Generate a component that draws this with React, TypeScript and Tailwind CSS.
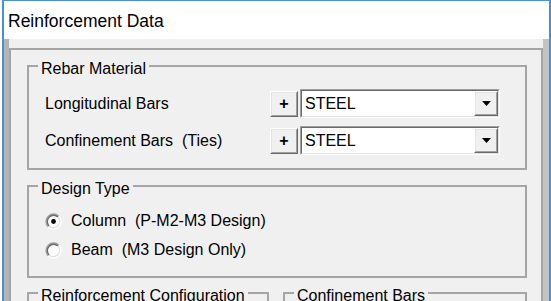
import React from "react";

function Raised({ className, children }: { className?: string; children?: React.ReactNode }) {
  return (
    <div className={`border border-t-white border-l-white border-r-[#696969] border-b-[#696969] ${className ?? ""}`}>
      <div className="h-full w-full border border-t-[#e3e3e3] border-l-[#e3e3e3] border-r-[#a0a0a0] border-b-[#a0a0a0] bg-[#f0f0f0] flex items-center justify-center">
        {children}
      </div>
    </div>
  );
}

function Combo({ value }: { value: string }) {
  return (
    <div className="w-[200px] h-[29px] border border-t-[#a0a0a0] border-l-[#a0a0a0] border-r-white border-b-white">
      <div className="h-full border border-t-[#696969] border-l-[#696969] border-r-[#e3e3e3] border-b-[#e3e3e3] bg-white flex items-center">
        <span className="flex-1 pl-[3px] text-black">{value}</span>
        <Raised className="w-[24px] h-full">
          <svg width="9" height="5" viewBox="0 0 9 5">
            <polygon points="0,0 9,0 4.5,5" fill="#000" />
          </svg>
        </Raised>
      </div>
    </div>
  );
}

function Radio({ checked, label }: { checked?: boolean; label: string }) {
  const arc = (r: number) => {
    const c = 8.5;
    const d = r * 0.7071;
    return {
      tl: `M ${c - d} ${c + d} A ${r} ${r} 0 0 1 ${c + d} ${c - d}`,
      br: `M ${c + d} ${c - d} A ${r} ${r} 0 0 1 ${c - d} ${c + d}`,
    };
  };
  const o = arc(7.5);
  const i = arc(6.2);
  return (
    <div className="h-[20px] flex items-center">
      <svg width="17" height="17" viewBox="0 0 17 17">
        <circle cx="8.5" cy="8.5" r="6" fill="#fff" />
        <path d={o.tl} stroke="#a0a0a0" strokeWidth="1.4" fill="none" />
        <path d={o.br} stroke="#ffffff" strokeWidth="1.4" fill="none" />
        <path d={i.tl} stroke="#696969" strokeWidth="1.4" fill="none" />
        <path d={i.br} stroke="#e3e3e3" strokeWidth="1.4" fill="none" />
        {checked && <circle cx="8.5" cy="8.5" r="2.4" fill="#000" />}
      </svg>
      <span className="ml-[9px] whitespace-pre text-black">{label}</span>
    </div>
  );
}

function Group({ title, className, children }: { title: string; className?: string; children?: React.ReactNode }) {
  return (
    <fieldset className={`border-2 border-[#a5a5a5] min-w-0 ${className ?? ""}`}>
      <legend className="ml-[9px] px-[3px] pt-[7px] leading-[18px] bg-[#f0f0f0] text-black">{title}</legend>
      {children}
    </fieldset>
  );
}

export default function App() {
  return (
    <div className="w-[551px] h-[301px] bg-white overflow-hidden font-['Liberation_Sans',Arial,sans-serif] text-[16px]">
      <div className="ml-[2px] h-full flex flex-col border-t border-x-2 border-[#4a90d9]">
        {/* Title bar */}
        <div className="h-[38px] shrink-0 bg-white flex items-center pl-[4px] pt-[3px]">
          <span className="text-[17.5px] text-black">Reinforcement Data</span>
        </div>

        {/* Client area */}
        <div className="flex-1 flex bg-[#f0f0f0] min-h-0">
          <div className="w-[5px] shrink-0 bg-[#b4b4b4]" />
          <div className="flex-1 pt-[9px] min-w-0">
            <div className="h-[300px] border-2 border-[#a5a5a5] pt-[3px] pl-[16px] pr-[14px]">
              <Group title="Rebar Material">
                <div className="pt-[11px] pb-[13px] pl-[16px] flex flex-col gap-[8px]">
                  <div className="h-[29px] flex items-center">
                    <span className="w-[225px] whitespace-pre text-black">Longitudinal Bars</span>
                    <Raised className="w-[28px] h-[26px]">
                      <span className="font-bold text-[16px] leading-none">+</span>
                    </Raised>
                    <div className="ml-[2px]">
                      <Combo value="STEEL" />
                    </div>
                  </div>
                  <div className="h-[29px] flex items-center">
                    <span className="w-[225px] whitespace-pre text-black">Confinement Bars  (Ties)</span>
                    <Raised className="w-[28px] h-[26px]">
                      <span className="font-bold text-[16px] leading-none">+</span>
                    </Raised>
                    <div className="ml-[2px]">
                      <Combo value="STEEL" />
                    </div>
                  </div>
                </div>
              </Group>

              <Group title="Design Type" className="mt-[3px]">
                <div className="pt-[13px] pb-[16px] pl-[16px] flex flex-col gap-[9px]">
                  <Radio checked label="Column  (P-M2-M3 Design)" />
                  <Radio label="Beam  (M3 Design Only)" />
                </div>
              </Group>

              <div className="mt-[2px] grid grid-cols-[242px_1fr] gap-[14px]">
                <Group title="Reinforcement Configuration">
                  <div className="h-[60px]" />
                </Group>
                <Group title="Confinement Bars">
                  <div className="h-[60px]" />
                </Group>
              </div>
            </div>
          </div>
          <div className="w-[6px] shrink-0 bg-[#c4c4c4]" />
        </div>
      </div>
    </div>
  );
}
